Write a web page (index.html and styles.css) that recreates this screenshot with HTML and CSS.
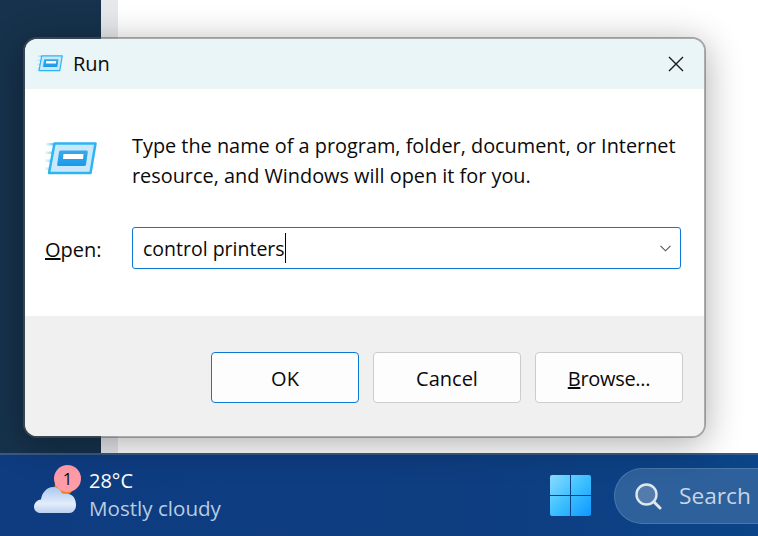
FILE: index.html
```html
<!DOCTYPE html>
<html lang="en">
<head>
<meta charset="utf-8">
<title>Run</title>
<link rel="stylesheet" href="styles.css">
</head>
<body>
<div class="desktop">
  <div class="backdrop">
    <div class="side-dark"></div>
    <div class="side-strip"></div>
    <div class="content"></div>
  </div>
  <footer class="taskbar">
    <div class="weather">
      <svg class="weather-icon" width="46" height="34" viewBox="0 0 46 34">
        <defs>
          <linearGradient id="cloud" x1="0" y1="0" x2="0" y2="1">
            <stop offset="0" stop-color="#a9c8f0"/>
            <stop offset="0.65" stop-color="#e3edfb"/>
            <stop offset="1" stop-color="#bcd0ee"/>
          </linearGradient>
        </defs>
        <circle cx="30" cy="3" r="9.500" fill="#f0821e"/>
        <path d="M7 30C3 30 0 27.500 0 24C0 20 3 17 7 16.500C8 9.500 13 4 19 4C23 4 26.500 6.500 28 10.500C30 10.500 32 11 34 11C39 11 42 16 42 22C42 27 39 30 35 30Z" fill="url(#cloud)"/>
      </svg>
      <span class="badge">1</span>
      <div class="weather-text">
        <span class="temp">28°C</span>
        <span class="cond">Mostly cloudy</span>
      </div>
    </div>
    <svg class="start" width="41" height="41" viewBox="0 0 41 41">
      <defs>
        <linearGradient id="win" x1="0" y1="0" x2="1" y2="1">
          <stop offset="0" stop-color="#8ddcff"/>
          <stop offset="0.5" stop-color="#3cc0ff"/>
          <stop offset="1" stop-color="#0f97ff"/>
        </linearGradient>
      </defs>
      <path d="M2 0H20V20H0V2A2 2 0 0 1 2 0ZM21 0H39A2 2 0 0 1 41 2V20H21ZM0 21H20V41H2A2 2 0 0 1 0 39ZM21 21H41V39A2 2 0 0 1 39 41H21Z" fill="url(#win)"/>
    </svg>
    <div class="search">
      <svg class="search-icon" width="28" height="28" viewBox="0 0 28 28">
        <circle cx="12.500" cy="12.500" r="10" fill="#ffffff" fill-opacity="0.18" stroke="#dfe6ee" stroke-width="2.400"/>
        <path d="M19.800 19.800L26 26" stroke="#dfe6ee" stroke-width="3" stroke-linecap="round"/>
      </svg>
      <span class="search-label">Search</span>
    </div>
  </footer>
  <section class="dialog">
    <header class="titlebar">
      <svg class="run-icon-small" width="26" height="17" viewBox="0 0 52 34">
        <use href="#run"/>
      </svg>
      <span class="title">Run</span>
      <svg class="close" width="16" height="16" viewBox="0 0 16 16">
        <path d="M1 1L15 15M15 1L1 15" stroke="#1a1a1a" stroke-width="1.400" fill="none"/>
      </svg>
    </header>
    <div class="body">
      <div class="intro">
        <svg class="run-icon" width="52" height="34" viewBox="0 0 52 34">
          <defs>
            <linearGradient id="speed" x1="0" y1="0" x2="1" y2="0">
              <stop offset="0" stop-color="#8fdcfa" stop-opacity="0.150"/>
              <stop offset="1" stop-color="#59c6f5"/>
            </linearGradient>
            <linearGradient id="inner" x1="0" y1="0" x2="0" y2="1">
              <stop offset="0" stop-color="#3aa9e6"/>
              <stop offset="1" stop-color="#1a9aea"/>
            </linearGradient>
            <g id="run">
              <path d="M1 1H9V3.500H1ZM0 9.500H8V12H0ZM0 17.500H7V20H0ZM0 25.500H5V28H0Z" fill="url(#speed)"/>
              <path d="M9.500 1.500H50.500L45.500 31H4Z" fill="#c9e8fb" stroke="#2db5f2" stroke-width="2.500" stroke-linejoin="round"/>
              <path d="M15.500 8.500H41.500Q43 8.500 42.800 10L41 22.500Q40.800 24 39 24H13.500Q12 24 12.200 22.500L14 10Q14.200 8.500 15.500 8.500Z" fill="url(#inner)"/>
              <path d="M18.500 12H38.500L38 17H18Z" fill="#ffffff"/>
            </g>
          </defs>
          <use href="#run"/>
        </svg>
        <p class="message">Type the name of a program, folder, document, or Internet resource, and Windows will open it for you.</p>
      </div>
      <div class="open-row">
        <label class="open-label"><u>O</u>pen:</label>
        <div class="combo">
          <span class="combo-text">control printers</span><span class="caret"></span>
          <svg class="chevron" width="11" height="7" viewBox="0 0 11 7">
            <path d="M0.500 0.800L5.500 5.800L10.500 0.800" stroke="#555" stroke-width="1.100" fill="none"/>
          </svg>
        </div>
      </div>
    </div>
    <div class="actions">
      <button class="btn btn-primary">OK</button>
      <button class="btn">Cancel</button>
      <button class="btn btn-browse"><u>B</u>rowse...</button>
    </div>
  </section>
</div>
</body>
</html>
```

FILE: styles.css
```css
* { box-sizing: border-box; }
html, body { margin: 0; padding: 0; }
body { width: 758px; height: 536px; overflow: hidden; font-family: "Open Sans", "Noto Sans", sans-serif; }
.desktop { position: relative; width: 758px; height: 536px; display: flex; flex-direction: column; }
.backdrop { flex: 1; display: flex; min-height: 0; }
.side-dark { width: 101px; background: #16324c; }
.side-strip { width: 17px; background: #e6e8ec; }
.content { flex: 1; background: #ffffff; }
.taskbar {
  height: 83px; flex: none; display: flex; align-items: center; padding-left: 34px;
  background: linear-gradient(90deg, #0f3c80 0%, #0e3d80 60%, #0b4488 100%);
  border-top: 2px solid #3a5a85;
  color: #fff;
}
.weather { position: relative; width: 516px; flex: none; display: flex; align-items: center; }
.weather-icon { flex: none; margin-top: 8px; overflow: visible; }
.badge {
  position: absolute; left: 20px; top: -4px; width: 27px; height: 27px; border-radius: 50%;
  background: #ff9ca8; color: #111; font-size: 17px; line-height: 27px; text-align: center;
}
.weather-text { margin: -2px 0 0 9px; display: flex; flex-direction: column; white-space: nowrap; }
.temp { font-size: 20px; line-height: 27px; color: #fff; }
.cond { font-size: 20.600px; line-height: 28px; color: #b9cce3; }
.start { flex: none; }
.search {
  margin-left: 23px; flex: none; width: 144px; height: 56px; border-radius: 28px 0 0 28px;
  background: #2e609b; border: 1px solid #4a76aa; border-right: 0; display: flex; align-items: center;
}
.search-icon { margin-left: 19px; flex: none; }
.search-label { margin-left: 17px; font-size: 22.700px; color: #c8d6e6; white-space: nowrap; }

.dialog {
  position: absolute; left: 23px; top: 37px; width: 683px; height: 401px;
  border: 2px solid rgba(90,90,90,.5); border-radius: 14px; background: #fff; background-clip: padding-box; overflow: hidden;
  box-shadow: 0 6px 36px rgba(0,0,0,.32);
  display: flex; flex-direction: column;
  color: #0a0a0a;
}
.titlebar { height: 50px; flex: none; background: #e9f5f6; display: flex; align-items: center; padding: 0 20px 0 12px; border-bottom: 1px solid #eef3f3; }
.run-icon-small { flex: none; }
.title { margin-left: 10px; font-size: 20px; flex: 1; }
.body { flex: 1; padding: 42px 23px 0 20px; background: #fff; }
.intro { display: flex; }
.run-icon { flex: none; margin-top: 11px; }
.message { margin: 0 0 0 35px; font-size: 19.870px; line-height: 30px; width: 552px; }
.open-row { display: flex; align-items: center; margin-top: 36px; }
.open-label { font-size: 20px; width: 87px; padding-top: 2px; }
.combo {
  flex: 1; height: 42px; border: 1px solid #0a78d4; border-radius: 3px; display: flex; align-items: center;
  padding: 0 9px 0 10px; font-size: 19.500px;
}
.combo-text { white-space: nowrap; }
.caret { width: 1px; height: 30px; background: #000; flex: none; }
.chevron { margin-left: auto; }
.actions {
  height: 120px; flex: none; background: #f0f0f0; display: flex; gap: 14px;
  padding: 36px 21px 0 186px;
}
.btn {
  width: 148px; height: 51px; background: #fdfdfd; border: 1px solid #cccccc; border-radius: 4px;
  font: 20px "Open Sans", "Noto Sans", sans-serif; color: #0a0a0a; padding: 2px 0 0;
}
.btn-primary { border: 1.500px solid #0a78d4; }
.btn-browse { letter-spacing: -0.300px; }
```
